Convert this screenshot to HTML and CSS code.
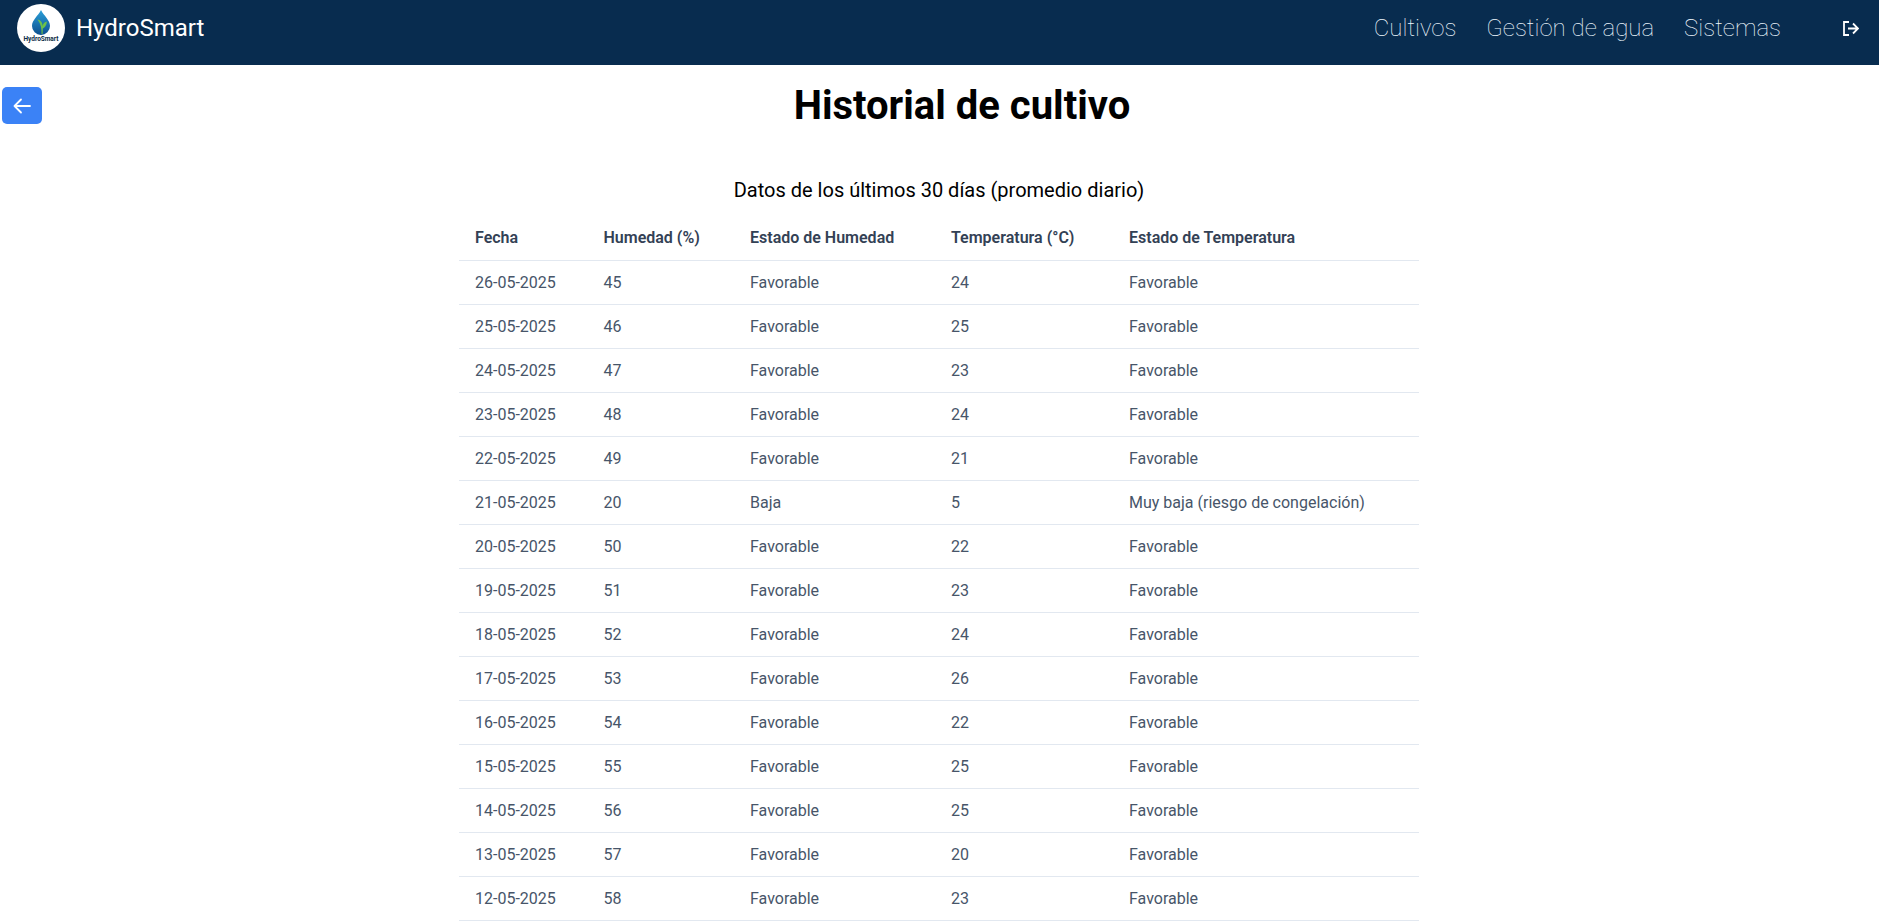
FILE: index.html
```html
<!doctype html>

<html lang="es">
    <head>
        <meta charset="utf-8">
        <title>HydroSmart</title>
        <link rel="stylesheet" href="styles.css">
    </head>
    <body>
        <nav class="navbar">
            <a class="brand" href="#">
                <svg class="brand-logo" viewBox="0 0 48 48" width="48" height="48">
                    <defs>
                        <linearGradient id="drop" x1="0" y1="0" x2="0" y2="1">
                            <stop offset="0" stop-color="#2a9fd8"/>
                            <stop offset="1" stop-color="#0d4f8f"/>
                        </linearGradient>
                    </defs>
                    <circle cx="24" cy="24" r="24" fill="#fff"/>
                    <path d="M24 6 C27 12 33 16 33 22 A9 9 0 0 1 15 22 C15 16 21 12 24 6 Z" fill="url(#drop)"/>
                    <path d="M24.500 30 C24.800 25 24 20 20.500 15.500 C24 16 25.500 19 25.700 22 C26 19.500 27.500 18 30 17.500 C29.500 21 28 23.500 25.800 24.500 L25.600 30 Z" fill="#6cc04a"/>
                    <text class="brand-logo-text" x="24" y="37" text-anchor="middle" textLength="35">HydroSmart</text>
                </svg>
                <span>HydroSmart</span>
            </a>
            <div class="nav-links">
                <a href="#">Cultivos</a>
                <a href="#">Gestión de agua</a>
                <a href="#">Sistemas</a>
            </div>
            <a class="logout" href="#" aria-label="Salir">
                <svg viewBox="0 0 16 15" width="16" height="15" fill="none" stroke="#fff" stroke-width="1.800">
                    <path d="M6 1 H1 V14 H6"/>
                    <path d="M5 7.500 H15 M10 2.500 L15 7.500 L10 12.500"/>
                </svg>
            </a>
        </nav>

        <main class="content">
            <div class="title-row">
                <a class="back-btn" href="#" aria-label="Volver">
                    <svg viewBox="0 0 20 20" width="20" height="20" fill="none" stroke="#fff" stroke-width="1.800" stroke-linecap="round" stroke-linejoin="round">
                        <path d="M18 10 H2.500 M9 3.500 L2.500 10 L9 16.500"/>
                    </svg>
                </a>
                <h1>Historial de cultivo</h1>
            </div>

            <h2 class="subtitle">Datos de los últimos 30 días (promedio diario)</h2>

            <table class="history">
                <thead>
                    <tr>
                        <th class="col-date">Fecha</th>
                        <th class="col-hum">Humedad (%)</th>
                        <th class="col-hum-state">Estado de Humedad</th>
                        <th class="col-temp">Temperatura (°C)</th>
                        <th>Estado de Temperatura</th>
                    </tr>
                </thead>
                <tbody>
                    <tr><td>26-05-2025</td><td>45</td><td>Favorable</td><td>24</td><td>Favorable</td></tr>
                    <tr><td>25-05-2025</td><td>46</td><td>Favorable</td><td>25</td><td>Favorable</td></tr>
                    <tr><td>24-05-2025</td><td>47</td><td>Favorable</td><td>23</td><td>Favorable</td></tr>
                    <tr><td>23-05-2025</td><td>48</td><td>Favorable</td><td>24</td><td>Favorable</td></tr>
                    <tr><td>22-05-2025</td><td>49</td><td>Favorable</td><td>21</td><td>Favorable</td></tr>
                    <tr><td>21-05-2025</td><td>20</td><td>Baja</td><td>5</td><td>Muy baja (riesgo de congelación)</td></tr>
                    <tr><td>20-05-2025</td><td>50</td><td>Favorable</td><td>22</td><td>Favorable</td></tr>
                    <tr><td>19-05-2025</td><td>51</td><td>Favorable</td><td>23</td><td>Favorable</td></tr>
                    <tr><td>18-05-2025</td><td>52</td><td>Favorable</td><td>24</td><td>Favorable</td></tr>
                    <tr><td>17-05-2025</td><td>53</td><td>Favorable</td><td>26</td><td>Favorable</td></tr>
                    <tr><td>16-05-2025</td><td>54</td><td>Favorable</td><td>22</td><td>Favorable</td></tr>
                    <tr><td>15-05-2025</td><td>55</td><td>Favorable</td><td>25</td><td>Favorable</td></tr>
                    <tr><td>14-05-2025</td><td>56</td><td>Favorable</td><td>25</td><td>Favorable</td></tr>
                    <tr><td>13-05-2025</td><td>57</td><td>Favorable</td><td>20</td><td>Favorable</td></tr>
                    <tr><td>12-05-2025</td><td>58</td><td>Favorable</td><td>23</td><td>Favorable</td></tr>
                </tbody>
            </table>
        </main>
    </body>
</html>
```

FILE: styles.css
```css
html, body {
    margin: 0;
    background: #fff;
    font-family: Roboto, "Liberation Sans", sans-serif;
}
a {
    text-decoration: none;
}

/* Top bar */
.navbar {
    display: flex;
    align-items: center;
    height: 65px;
    box-sizing: border-box;
    padding: 4px 20px 13px 17px;
    background: #082c4f;
}
.brand {
    display: flex;
    align-items: center;
    gap: 11px;
    color: #fff;
    font-size: 24px;
}
.brand-logo-text {
    font-family: Roboto, sans-serif;
    font-size: 6.500px;
    font-weight: 700;
    fill: #0b2a45;
}
.nav-links {
    display: flex;
    gap: 30px;
    margin-left: auto;
}
.nav-links a {
    color: #f0f9ff;
    font-size: 24px;
    font-weight: 100;
}
.logout {
    display: flex;
    margin-left: 62px;
}

/* 1px narrower than the window: the table sits at 459, not 459.5 */
.content {
    padding-right: 1px;
}

/* Title */
.title-row {
    display: flex;
    align-items: flex-start;
    gap: 4px;
    padding: 22px 0 0 2px;
}
.back-btn {
    display: flex;
    align-items: center;
    justify-content: center;
    width: 40px;
    height: 37px;
    border-radius: 5px;
    background: #3b82f6;
}
.title-row h1 {
    flex: 1;
    margin: -5px 0 0;
    font-size: 40px;
    font-weight: 700;
    line-height: 48px;
    text-align: center;
    color: #000;
}
.subtitle {
    margin: 46px 0 0;
    font-size: 20px;
    font-weight: 400;
    line-height: 28px;
    text-align: center;
    color: #000;
}

/* History table */
.history {
    width: 960px;
    margin: 12px auto 0;
    border-collapse: collapse;
    table-layout: fixed;
    color: #475569;
    font-size: 16px;
}
.history th,
.history td {
    box-sizing: border-box;
    height: 44px;
    padding: 0 16px;
    border-bottom: 1px solid #e2e8f0;
}
.history th {
    color: #334155;
    font-weight: 600;
    text-align: left;
}
.col-date {
    width: 128.500px;
}
.col-hum {
    width: 146.500px;
}
.col-hum-state {
    width: 201px;
}
.col-temp {
    width: 178px;
}
```
